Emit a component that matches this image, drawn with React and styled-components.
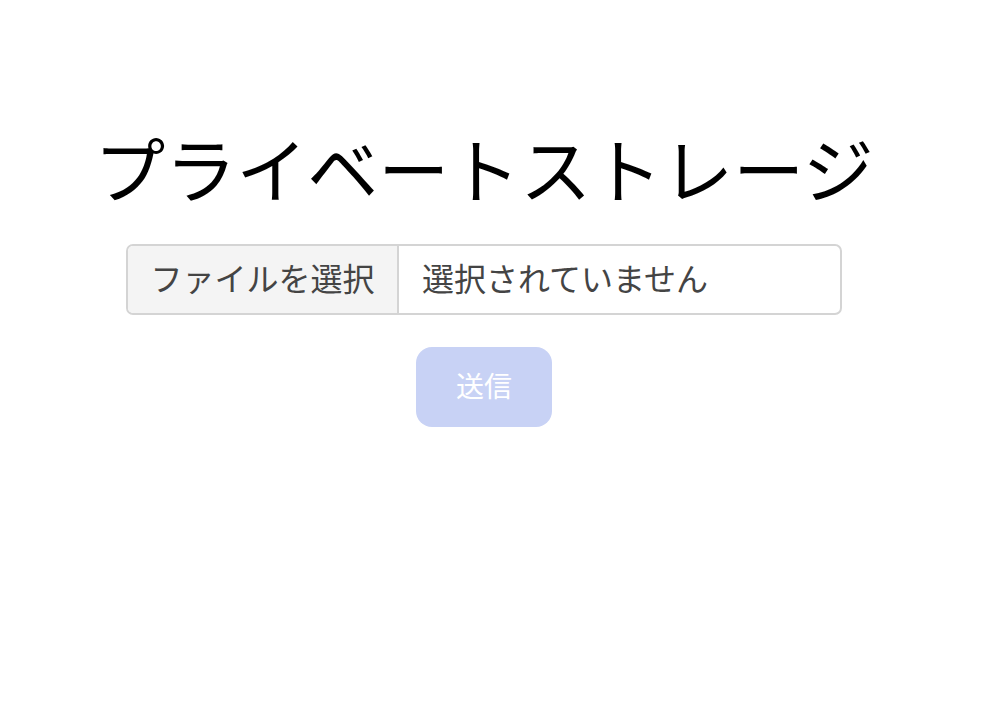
import React from "react";
import styled, { createGlobalStyle } from "styled-components";

const Global = createGlobalStyle`
  html, body { margin: 0; padding: 0; background: #ffffff; }
  body { font-family: "Noto Sans CJK JP", "Noto Sans", sans-serif; }
`;

const Page = styled.main`
  display: flex;
  flex-direction: column;
  align-items: center;
  padding: 116px 28px 0 0;
`;

const Title = styled.h1`
  margin: 0;
  font-size: 71px;
  font-weight: 400;
  line-height: 100px;
  color: #000;
  letter-spacing: 0;
`;

const Form = styled.form`
  display: flex;
  flex-direction: column;
  align-items: center;
  gap: 32px;
  margin-top: 28px;
`;

const FileField = styled.label`
  display: flex;
  width: 716px;
  height: 71px;
  box-sizing: border-box;
  border: 2px solid #d4d4d4;
  border-radius: 7px;
  overflow: hidden;
  cursor: pointer;
  background: #fff;
`;

const FileButton = styled.span`
  display: flex;
  align-items: center;
  justify-content: center;
  width: 271px;
  flex: none;
  padding-bottom: 5px;
  box-sizing: border-box;
  background: #f4f4f4;
  border-right: 2px solid #d4d4d4;
  font-size: 32px;
  color: #444;
`;

const FileName = styled.span`
  display: flex;
  align-items: center;
  padding: 0 0 5px 23px;
  font-size: 32px;
  color: #444;
`;

const HiddenInput = styled.input`
  display: none;
`;

const Submit = styled.button`
  width: 136px;
  height: 80px;
  padding: 0 0 4px;
  border: none;
  border-radius: 16px;
  background: #c8d2f5;
  color: #fff;
  font-family: inherit;
  font-size: 28px;
  cursor: not-allowed;
`;

export default function App() {
  return (
    <>
      <Global />
      <Page>
        <Title>プライベートストレージ</Title>
        <Form onSubmit={(e) => e.preventDefault()}>
          <FileField>
            <HiddenInput type="file" />
            <FileButton>ファイルを選択</FileButton>
            <FileName>選択されていません</FileName>
          </FileField>
          <Submit type="submit" disabled>送信</Submit>
        </Form>
      </Page>
    </>
  );
}
